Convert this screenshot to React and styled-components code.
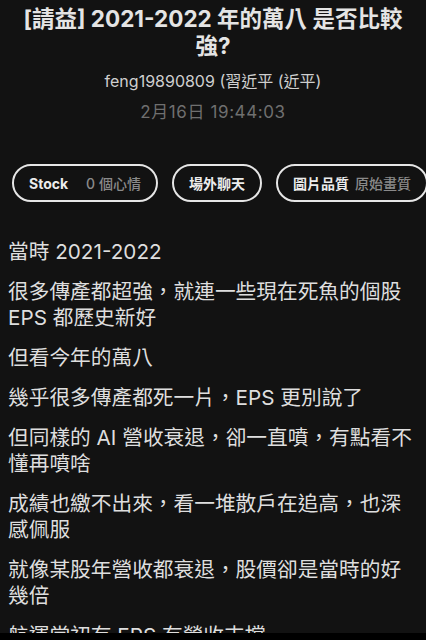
import React from 'react';
import styled, { createGlobalStyle } from 'styled-components';

const GlobalStyle = createGlobalStyle`
  html, body {
    margin: 0;
    padding: 0;
    background: #121212;
  }
  body {
    font-family: Inter, "Noto Sans CJK TC", "Noto Sans", sans-serif;
    -webkit-font-smoothing: antialiased;
  }
`;

const Screen = styled.div`
  width: 426px;
  height: 640px;
  display: flex;
  flex-direction: column;
  background: #121212;
  overflow: hidden;
`;

const Scroll = styled.div`
  flex: 1;
  overflow: hidden;
`;

const BottomBar = styled.div`
  height: 7px;
  flex-shrink: 0;
  background: #000;
`;

const Header = styled.header`
  display: flex;
  flex-direction: column;
  align-items: center;
  padding: 5px 16px 0;
  text-align: center;
`;

const Title = styled.h1`
  margin: 0;
  font-size: 22.5px;
  line-height: 27px;
  font-weight: 700;
  color: #e4e4e4;
`;

const Author = styled.div`
  margin-top: 12px;
  font-size: 16px;
  line-height: 20px;
  color: #cfcfcf;
`;

const Stamp = styled.div`
  margin-top: 11px;
  font-size: 17px;
  line-height: 20px;
  letter-spacing: 0.6px;
  color: #6f6f6f;
`;

const Chips = styled.div`
  display: flex;
  gap: 14px;
  padding: 42px 7px 0 12px;
`;

const Chip = styled.div`
  height: 38px;
  box-sizing: border-box;
  display: flex;
  align-items: center;
  gap: ${p => p.$gap || 6}px;
  padding: 0 15px;
  border: 2px solid #e6e6e6;
  border-radius: 19px;
  font-size: 14px;
  font-weight: 700;
  color: #ececec;
  white-space: nowrap;
  flex: ${p => p.$grow ? 1 : 'none'};
  justify-content: ${p => p.$grow ? 'center' : 'flex-start'};
`;

const Muted = styled.span`
  color: #8a8a8a;
  font-weight: 500;
`;

const Body = styled.article`
  padding: 37px 8px 0 8px;
  font-size: 20.7px;
  line-height: 26px;
  color: #dedede;
`;

const Para = styled.p`
  margin: 0 0 14px;
`;

const paragraphs = [
  '當時 2021-2022',
  '很多傳產都超強，就連一些現在死魚的個股 EPS 都歷史新好',
  '但看今年的萬八',
  '幾乎很多傳產都死一片，EPS 更別說了',
  '但同樣的 AI 營收衰退，卻一直噴，有點看不懂再噴啥',
  '成績也繳不出來，看一堆散戶在追高，也深感佩服',
  '就像某股年營收都衰退，股價卻是當時的好幾倍',
  '航運當初有 EPS 有營收支撐',
];

export default function App() {
  return (
    <>
      <GlobalStyle />
      <Screen>
        <Scroll>
          <Header>
            <Title>[請益] 2021-2022 年的萬八 是否比較強?</Title>
            <Author>feng19890809 (習近平 (近平)</Author>
            <Stamp>2月16日 19:44:03</Stamp>
          </Header>
          <Chips>
            <Chip $gap={18}>Stock <Muted>0 個心情</Muted></Chip>
            <Chip>場外聊天</Chip>
            <Chip $grow>圖片品質 <Muted>原始畫質</Muted></Chip>
          </Chips>
          <Body>
            {paragraphs.map((t, i) => <Para key={i}>{t}</Para>)}
          </Body>
        </Scroll>
        <BottomBar />
      </Screen>
    </>
  );
}
